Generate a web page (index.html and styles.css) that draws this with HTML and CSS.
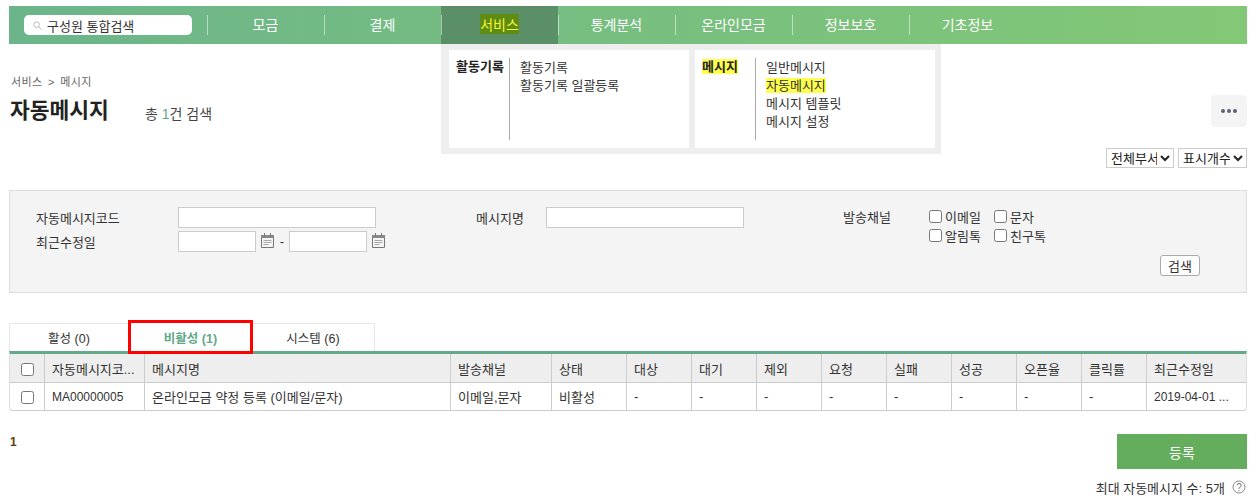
FILE: index.html
```html
<!DOCTYPE html>
<html lang="ko">
<head>
<meta charset="utf-8">
<title>자동메시지</title>
<link rel="stylesheet" href="styles.css">
</head>
<body>
<div class="page">
  <nav class="gnb">
    <div class="gnb-search">
      <svg class="search-ico" width="9" height="9" viewBox="0 0 9 9"><circle cx="3.6" cy="3.6" r="2.8" fill="none" stroke="#bbb"/><path d="M5.6 5.6 8.5 8.5" stroke="#bbb"/></svg>
      <span>구성원 통합검색</span>
    </div>
    <ul class="gnb-list">
      <li>모금</li>
      <li>결제</li>
      <li class="active"><span class="mark-dark">서비스</span></li>
      <li>통계분석</li>
      <li>온라인모금</li>
      <li>정보보호</li>
      <li>기초정보</li>
    </ul>
    <div class="dropdown">
      <div class="drop-panel">
        <div class="drop-title">활동기록</div>
        <ul class="drop-links">
          <li>활동기록</li>
          <li>활동기록 일괄등록</li>
        </ul>
      </div>
      <div class="drop-panel">
        <div class="drop-title"><span class="mark">메시지</span></div>
        <ul class="drop-links">
          <li>일반메시지</li>
          <li><span class="mark">자동메시지</span></li>
          <li>메시지 템플릿</li>
          <li>메시지 설정</li>
        </ul>
      </div>
    </div>
  </nav>

  <div class="crumb">서비스 &gt; 메시지</div>
  <div class="title-row">
    <h1>자동메시지</h1>
    <span class="count">총 <b>1</b>건 검색</span>
    <button class="more" type="button" aria-label="더보기"><i></i><i></i><i></i></button>
  </div>

  <div class="filters">
    <select class="sel-a"><option>전체부서</option></select>
    <select class="sel-b"><option>표시개수</option></select>
  </div>

  <form class="search">
    <div class="field-col col-a">
      <div class="field">
        <label>자동메시지코드</label>
        <input class="in-long" type="text">
      </div>
      <div class="field">
        <label>최근수정일</label>
        <input class="in-date" type="text">
        <svg class="cal" width="15" height="16" viewBox="0 0 15 16"><path d="M1.500 3.500h12v12h-12z" fill="#f4f4f4" stroke="#777"/><path d="M1 3h13v3H1z" fill="#888"/><path d="M4.500 1v3M10.500 1v3" stroke="#777"/><path d="M3.500 8.500h8M3.500 10.500h8M3.500 12.500h5" stroke="#aaa"/></svg>
        <span class="dash">-</span>
        <input class="in-date" type="text">
        <svg class="cal" width="15" height="16" viewBox="0 0 15 16"><path d="M1.500 3.500h12v12h-12z" fill="#f4f4f4" stroke="#777"/><path d="M1 3h13v3H1z" fill="#888"/><path d="M4.500 1v3M10.500 1v3" stroke="#777"/><path d="M3.500 8.500h8M3.500 10.500h8M3.500 12.500h5" stroke="#aaa"/></svg>
      </div>
    </div>
    <div class="field col-b">
      <label>메시지명</label>
      <input class="in-long" type="text">
    </div>
    <div class="field col-c">
      <label>발송채널</label>
      <div class="checks">
        <label class="chk"><input type="checkbox">이메일</label>
        <label class="chk"><input type="checkbox">문자</label>
        <label class="chk"><input type="checkbox">알림톡</label>
        <label class="chk"><input type="checkbox">친구톡</label>
      </div>
    </div>
    <button class="search-btn" type="button">검색</button>
  </form>

  <div class="tabs">
    <div class="tab">활성 (0)</div>
    <div class="tab on">비활성 (1)</div>
    <div class="tab">시스템 (6)</div>
  </div>

  <table class="grid">
    <thead>
      <tr>
        <th><input type="checkbox"></th>
        <th>자동메시지코...</th>
        <th>메시지명</th>
        <th>발송채널</th>
        <th>상태</th>
        <th>대상</th>
        <th>대기</th>
        <th>제외</th>
        <th>요청</th>
        <th>실패</th>
        <th>성공</th>
        <th>오픈율</th>
        <th>클릭률</th>
        <th>최근수정일</th>
      </tr>
    </thead>
    <tbody>
      <tr>
        <td><input type="checkbox"></td>
        <td class="latin">MA00000005</td>
        <td>온라인모금 약정 등록 (이메일/문자)</td>
        <td>이메일,문자</td>
        <td>비활성</td>
        <td>-</td>
        <td>-</td>
        <td>-</td>
        <td>-</td>
        <td>-</td>
        <td>-</td>
        <td>-</td>
        <td>-</td>
        <td class="latin">2019-04-01 ...</td>
      </tr>
    </tbody>
  </table>

  <div class="pager-row">
    <b class="pager">1</b>
    <button class="register" type="button">등록</button>
  </div>
  <div class="limit">
    <span>최대 자동메시지 수: 5개</span>
    <svg width="14" height="14" viewBox="0 0 14 14"><circle cx="7" cy="7" r="6" fill="none" stroke="#888"/><text x="7" y="10.500" text-anchor="middle" class="help-q">?</text></svg>
  </div>
</div>
</body>
</html>
```

FILE: styles.css
```css
* { box-sizing: border-box; }
html, body { margin: 0; padding: 0; background: #fff; }
body {
  font-family: "Liberation Sans", "Noto Sans CJK KR", sans-serif;
  font-size: 12px;
  color: #333;
  overflow: hidden;
}
ul { list-style: none; margin: 0; padding: 0; }
.page { padding: 6px 11px 0 9px; width: 1258px; }

.gnb {
  position: relative;
  height: 38px;
  display: flex;
  align-items: center;
  padding-left: 15px;
  background: linear-gradient(90deg, #6cb58a, #83c876);
}
.gnb-search {
  width: 168px;
  height: 20px;
  background: #fff;
  border-radius: 5px;
  display: flex;
  align-items: center;
  gap: 5px;
  padding-left: 9px;
  color: #333;
  font-size: 13px;
}
.search-ico { flex: none; }
.gnb-list { display: flex; height: 38px; margin-left: 15px; }
.gnb-list li {
  width: 117px;
  display: flex;
  align-items: center;
  justify-content: center;
  color: #fff;
  font-size: 14px;
  position: relative;
  padding-bottom: 2px;
}
.gnb-list li::before {
  content: "";
  position: absolute;
  left: 0;
  top: 9px;
  height: 20px;
  width: 1px;
  background: rgba(255, 255, 255, .5);
}
.gnb-list li.active { background: #5b8f67; }
.mark-dark { background: #5e8c12; color: #f4f43a; }

.dropdown {
  position: absolute;
  left: 432px;
  top: 38px;
  width: 500px;
  height: 110px;
  background: #eee;
  padding: 6px 6px 6px 8px;
  display: flex;
  gap: 6px;
  z-index: 5;
  color: #333;
  font-size: 13px;
}
.drop-panel {
  width: 240px;
  height: 98px;
  background: #fff;
  display: flex;
  padding: 8px 0 0 7px;
}
.drop-title {
  width: 54px;
  height: 82px;
  border-right: 1px solid #aaa;
  font-weight: bold;
  line-height: 18px;
  color: #222;
}
.drop-links { padding: 1px 0 0 10px; line-height: 18px; }
.mark { background: #ffff4d; }

.crumb { margin: 31px 0 0 2px; font-size: 11px; line-height: 14px; color: #666; letter-spacing: .4px; word-spacing: 2px; }
.title-row { display: flex; align-items: center; height: 32px; margin-top: 6px; }
.title-row h1 { margin: 0 0 0 1px; font-size: 21.500px; line-height: 32px; color: #222; font-weight: bold; width: 135px; }
.count { font-size: 14px; color: #444; padding-top: 4px; }
.count b { font-weight: normal; color: #5aa68a; }
.more {
  margin-left: auto;
  width: 36px;
  height: 32px;
  border: 0;
  border-radius: 4px;
  background: #f4f4f4;
  display: flex;
  align-items: center;
  justify-content: center;
  gap: 2px;
  padding: 0;
}
.more i { width: 4px; height: 4px; border-radius: 50%; background: #5c6078; }

.filters { display: flex; justify-content: flex-end; gap: 4px; margin-top: 21px; }
.filters select {
  height: 20px;
  font: 13px "Liberation Sans", "Noto Sans CJK KR", sans-serif;
  color: #222;
  background: #fff;
  border: 1px solid #ccc;
  padding: 0;
}
.sel-a { width: 68px; }
.sel-b { width: 69px; }

.search {
  position: relative;
  height: 103px;
  margin-top: 22px;
  background: #f4f4f4;
  border: 1px solid #ddd;
  display: flex;
  padding: 16px 0 0 26px;
  font-size: 13px;
  color: #333;
}
.field { display: flex; align-items: center; height: 21px; }
.field-col { display: flex; flex-direction: column; gap: 3px; }
.col-a { width: 440px; }
.col-a label { width: 142px; }
.field input[type=text] {
  height: 21px;
  border: 1px solid #ccc;
  background: #fff;
  padding: 0 2px;
  margin: 0;
}
.in-long { width: 198px; }
.in-date { width: 78px; }
.cal { margin: -3px 0 0 4px; }
.dash { width: 14px; text-align: center; }
.col-b { width: 367px; }
.col-b label { width: 70px; }
.col-c { align-items: flex-start; }
.col-c > label { width: 86px; line-height: 21px; }
.checks { display: grid; grid-template-columns: 65px auto; }
.chk { display: flex; align-items: center; height: 19px; }
.chk input { width: 13px; height: 13px; margin: 0 3px 0 0; }
.search-btn {
  position: absolute;
  right: 46px;
  top: 64px;
  width: 40px;
  height: 21px;
  background: #fff;
  border: 1px solid #aaa;
  border-radius: 3px;
  font: 13px "Liberation Sans", "Noto Sans CJK KR", sans-serif;
  color: #333;
  padding: 0;
}

.tabs { display: flex; margin-top: 30px; height: 28px; font-size: 12.500px; }
.tab {
  width: 123px;
  height: 28px;
  border: 1px solid #e6e6e6;
  border-left: 0;
  border-bottom: 0;
  display: flex;
  align-items: center;
  justify-content: center;
  color: #333;
  background: #fff;
}
.tab:first-child { width: 120px; border-left: 1px solid #e6e6e6; }
.tab.on {
  color: #5fa98a;
  font-weight: bold;
  position: relative;
  border: 0;
}
.tab.on::after {
  content: "";
  position: absolute;
  left: -1px;
  right: -1px;
  top: -3px;
  bottom: -3px;
  border: 3px solid #f00;
  z-index: 2;
}

.grid {
  width: 1238px;
  table-layout: fixed;
  border-collapse: separate;
  border-spacing: 0;
  border-top: 3px solid #63a98a;
  border-bottom: 1px solid #ccc;
  border-left: 1px solid #ddd;
  border-right: 1px solid #ddd;
  border-radius: 0 0 4px 4px;
  font-size: 13px;
}
.grid th, .grid td {
  padding: 0 0 0 7px;
  text-align: left;
  white-space: nowrap;
  overflow: hidden;
  border-right: 1px solid #ccc;
}
.grid th:last-child, .grid td:last-child { border-right: 0; }
.grid th {
  background: #eee;
  font-weight: normal;
  color: #333;
  height: 29px;
  border-bottom: 1px solid #ccc;
}
.grid td { height: 27px; color: #333; }
.grid td.latin { font-size: 12px; }
.grid th:first-child, .grid td:first-child { padding: 0; text-align: center; }
.grid input { width: 13px; height: 13px; margin: 0; vertical-align: middle; }
.grid th:nth-child(1) { width: 35px; }
.grid th:nth-child(2) { width: 100px; }
.grid th:nth-child(3) { width: 306px; }
.grid th:nth-child(4) { width: 101px; }
.grid th:nth-child(5) { width: 75px; }
.grid th:nth-child(n+6):nth-child(-n+13) { width: 65px; }

.pager-row { display: flex; justify-content: space-between; align-items: flex-start; margin-top: 23px; }
.pager { color: #5a3a10; margin-left: 1px; line-height: 14px; padding-top: 1px; }
.register {
  width: 130px;
  height: 35px;
  background: #63ad5c;
  color: #fff;
  border: 0;
  font: 14px "Liberation Sans", "Noto Sans CJK KR", sans-serif;
  padding: 0;
}
.limit { display: flex; justify-content: flex-end; align-items: center; gap: 7px; margin-top: 10px; font-size: 13px; height: 16px; padding-right: 1px; }
.help-q { font-size: 10px; fill: #777; }
```
